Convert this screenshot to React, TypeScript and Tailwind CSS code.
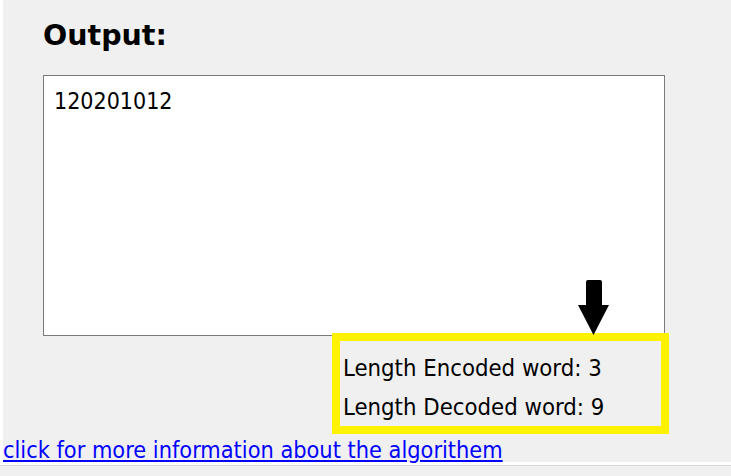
import React from "react";

const font = { fontFamily: '"DejaVu Sans Condensed", "DejaVu Sans", sans-serif', fontStretch: "condensed" } as React.CSSProperties;
const headFont = { fontFamily: '"DejaVu Sans", sans-serif', fontStretch: "normal" } as React.CSSProperties;

export default function App() {
  return (
    <div className="w-[731px] h-[476px] bg-white flex flex-col overflow-hidden" style={font}>
      <div className="ml-[3px] h-[462px] bg-[#f0f0f0] flex flex-col relative">
        <div className="pl-[40px] pt-[18px] h-[75px]">
          <h1 className="text-[28.5px] leading-[36px] font-bold text-black" style={headFont}>Output:</h1>
        </div>
        <div className="ml-[40px] w-[622px] h-[261px] bg-white border border-[#7a7a7a] pl-[10px] pt-[11px] text-[23px] leading-[28px] text-black">
          120201012
        </div>
        <div className="ml-[329px] -mt-[3px] w-[337px] h-[101px] border-[8px] border-[#fff200] pl-[3px] pt-[8px] text-[23.7px] leading-[39px] text-black">
          <div>Length Encoded word: 3</div>
          <div>Length Decoded word: 9</div>
        </div>
        <svg className="absolute left-[575px] top-[280px]" width="32" height="56" viewBox="0 0 32 56">
          <path d="M8 2 Q8 0 10 0 L22 0 Q24 0 24 2 L24 25 L31 25 L15.5 55 L0 25 L8 25 Z" fill="#000" />
        </svg>
        <div className="mt-auto">
          <a href="#" className="text-[#0000ff] underline text-[23.3px] leading-[24px] block w-max">click for more information about the algorithem</a>
        </div>
      </div>
      <div className="h-[3px] bg-white"></div>
      <div className="h-px bg-[#d9d9d9]"></div>
      <div className="flex-1 bg-[#f0f0f0]"></div>
    </div>
  );
}
